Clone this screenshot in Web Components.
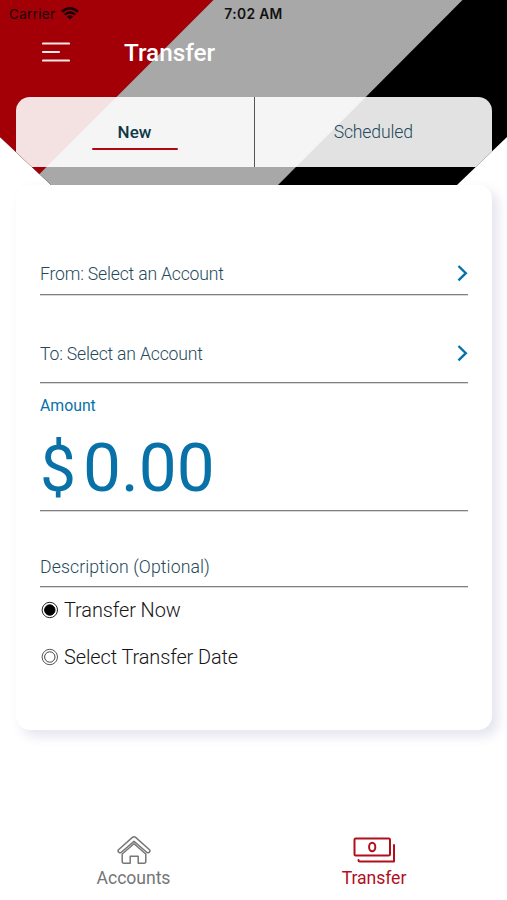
<!DOCTYPE html>
<html lang="en">
<head>
<meta charset="utf-8">
<title>Transfer</title>
<style>
html,body{margin:0;height:100%;background:#fff;overflow:hidden}
body{font-family:Roboto,"Liberation Sans",sans-serif}
</style>
</head>
<body>
<transfer-screen></transfer-screen>
<script>
const define = (name, html) => customElements.define(name, class extends HTMLElement {
  constructor() {
    super();
    this.attachShadow({mode: 'open'}).innerHTML = html;
  }
});

define('status-bar', `
<style>
:host{display:grid;grid-template-columns:1fr auto 1fr;align-items:center;height:28px;padding:0 9px;box-sizing:border-box;font:13.500px/28px Inter,"Liberation Sans",sans-serif;color:#180406}
.left{display:flex;align-items:center;gap:6px}
.c{letter-spacing:.3px}
b{font-weight:600;font-size:13.800px;color:#111;letter-spacing:.35px}
svg{display:block;margin-top:-2px}
</style>
<div class="left"><span class="c">Carrier</span>
<svg width="18" height="13" viewBox="0 0 18 13" fill="none" stroke="#180406" stroke-width="2.500"><path d="M1 4.700Q9-2.100 17 4.700M3.800 7.600Q9 3.200 14.200 7.600"/><path d="M9 12.600 5.900 9.500Q9 7 12.100 9.500Z" fill="#180406" stroke="none"/></svg></div>
<b>7:02 AM</b><span></span>`);

define('title-bar', `
<style>
:host{display:flex;align-items:center;height:50px;padding:0 42px;color:#fff}
svg{display:block;margin-top:-2px}
h1{margin:0 0 0 54px;font-size:24.300px;font-weight:500;line-height:50px}
</style>
<svg width="28" height="22" viewBox="0 0 28 22" fill="none" stroke="#fbe6e8" stroke-width="2.200" stroke-linecap="round"><path d="M1 2.500H27M1 11H17M1 19.500H27"/></svg>
<h1><slot></slot></h1>`);

define('tab-item', `
<style>
:host{display:flex;flex-direction:column;align-items:center;box-sizing:border-box;padding-top:25px;font-size:17.600px;line-height:20px;font-weight:300;color:#24495a;letter-spacing:-.15px}
:host([selected]){font-weight:500;color:#0d3847;border-right:1px solid #555;letter-spacing:0}
i{display:none;width:86px;height:2.400px;border-radius:1px;background:#b00813;margin-top:6px}
:host([selected]) i{display:block}
:host([selected]) span{font-size:17px}
</style>
<span><slot></slot></span><i></i>`);

define('tab-strip', `
<style>
:host{display:grid;grid-template-columns:239px 1fr;height:69.500px;margin:19px 15px 0 15.500px;border-radius:14px 14px 0 0;background:rgba(255,255,255,.885)}
</style><slot></slot>`);

define('page-header', `
<style>
:host{display:block;height:185px;clip-path:polygon(0 0,100% 0,100% 137px,457px 185px,51px 185px,0 137px)}
.bg{display:grid;height:185px}
.bg>*{grid-area:1/1}
svg{display:block}
</style>
<div class="bg">
<svg width="507" height="185" viewBox="0 0 507 185"><path fill="#000" d="M0 0H507V185H0z"/><path fill="#a8a8a8" d="M0 0H462.500L278 185H0z"/><path fill="#a20006" d="M0 0H213.500L28.500 185H0z"/></svg>
<div><slot></slot></div></div>`);

define('form-row', `
<style>
:host{display:flex;justify-content:space-between;box-sizing:border-box;border-bottom:1px solid #808080;box-shadow:0 1px #d8d8d8;font-size:17.600px;line-height:20px;font-weight:300;color:#24495a;letter-spacing:-.18px}
svg{display:none}
:host([arrow]) svg{display:block}
</style>
<span><slot></slot></span>
<svg width="11" height="18" viewBox="0 0 11 18" fill="none" stroke="#0872a8" stroke-width="2.400"><path d="M1.500 2 8.800 9.200 1.500 16.400"/></svg>`);

define('amount-field', `
<style>
:host{display:block;box-sizing:border-box;height:128px;padding-top:13px;border-bottom:1px solid #808080;box-shadow:0 1px #d8d8d8;color:#0872a8}
label{display:block;font-size:15.800px;line-height:20px}
.v{display:flex;font-size:67.500px;line-height:80px;margin-top:12px}
.d{font-size:64px;margin-right:7px;padding-top:2px}
</style>
<label>Amount</label><div class="v"><span class="d">$</span><span class="n">0.00</span></div>`);

define('radio-option', `
<style>
:host{display:flex;align-items:center;gap:5px;height:24px;font-size:19.900px;line-height:24px;font-weight:300;color:#151515;letter-spacing:-.08px}
span{margin-top:2px}
svg{display:block;margin-left:1px}
.dot{fill:none;stroke:#444;stroke-width:1}
:host([checked]) .dot{fill:#000;stroke:#000}
:host([checked]) .ring{stroke:#222}
</style>
<svg width="18" height="18" viewBox="0 0 18 18"><circle class="ring" cx="8.800" cy="9" r="7.700" fill="none" stroke="#555"/><circle class="dot" cx="8.800" cy="9" r="5.200"/></svg><span><slot></slot></span>`);

define('transfer-card', `
<style>
:host{display:block;box-sizing:border-box;height:545px;margin:0 15px 0 15.500px;padding:79px 24.500px 0;border-radius:14px;background:#fff;box-shadow:6px 6px 12px rgba(70,75,140,.15)}
.from{height:31px}.to{height:88px;padding-top:49px}.desc{height:76px;padding-top:46px;font-size:17.700px;letter-spacing:.08px}
.now{margin-top:11px}.later{margin-top:23px}
</style>
<form-row arrow class="from">From: Select an Account</form-row>
<form-row arrow class="to">To: Select an Account</form-row>
<amount-field></amount-field>
<form-row class="desc">Description (Optional)</form-row>
<radio-option class="now" checked>Transfer Now</radio-option>
<radio-option class="later">Select Transfer Date</radio-option>`);

define('nav-item', `
<style>
:host{display:flex;flex-direction:column;align-items:center;color:#757575;font-size:17.600px;line-height:20px;letter-spacing:-.05px}
:host([active]){color:#b0101c}
.i{display:flex;height:28px;margin-bottom:4px;align-items:center}
</style>
<div class="i"><slot name="icon"></slot></div><span><slot></slot></span>`);

define('bottom-nav', `
<style>
:host{display:flex;justify-content:space-between;margin-top:106px;padding:0 72px 0 72.500px}
nav-item{width:122px}
svg{display:block}
</style>
<nav-item>Accounts
<svg slot="icon" width="34" height="28" viewBox="0 0 34 28" fill="none" stroke="#777" stroke-width="1.500" stroke-linejoin="round" stroke-linecap="round"><path d="M15.400 1.400Q17 .2 18.600 1.400L32.500 13.700Q33.500 14.800 32.500 16T30 16.500L17 5.400 4 16.500Q2.500 17.200 1.500 16T1.500 13.700Z"/><path d="M5.200 18 17 7.800 28.800 18V25.500Q28.800 27.200 27 27.200H21.200V20.200H13.200V27.200H7Q5.200 27.200 5.200 25.500Z"/></svg></nav-item>
<nav-item active>Transfer
<svg slot="icon" width="43" height="28" viewBox="0 0 43 28" fill="none" stroke="#b0101c" stroke-width="2" stroke-linejoin="round" stroke-linecap="round"><rect x="1.500" y="2.500" width="35.500" height="17" rx="1.200"/><ellipse cx="19.200" cy="11" rx="3.100" ry="4.300"/><path d="M41 9V25.500H7Q5.500 25.500 5.500 24"/></svg></nav-item>`);

define('transfer-screen', `
<style>:host{display:block;width:507px;height:900px;overflow:hidden;background:#fff}
page-header{position:relative}</style>
<page-header><status-bar></status-bar><title-bar>Transfer</title-bar>
<tab-strip><tab-item selected>New</tab-item><tab-item>Scheduled</tab-item></tab-strip></page-header>
<transfer-card></transfer-card>
<bottom-nav></bottom-nav>`);
</script>
</body>
</html>
